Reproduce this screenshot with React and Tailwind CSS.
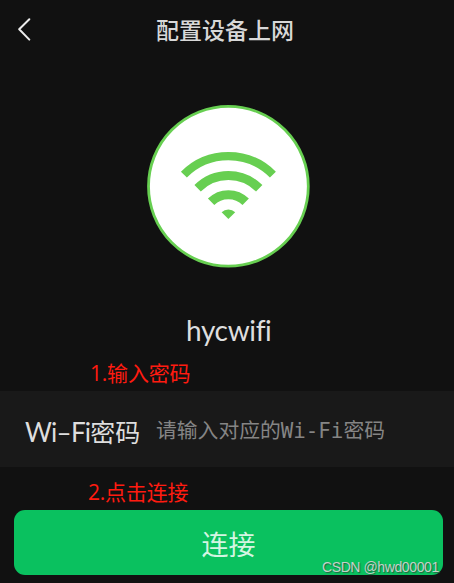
const CJK = "font-['Noto_Sans_CJK_SC',sans-serif]";

function Header() {
  return (
    <header className="flex h-[60px] items-center pl-[17px]">
      <svg width="14" height="24" viewBox="0 0 14 24" fill="none" stroke="#ececec" strokeWidth="2" strokeLinecap="round" strokeLinejoin="round">
        <path d="M12.3 1.2 2.2 11.3 12.3 21.6" />
      </svg>
      <h1 className="mb-[2px] ml-[125px] whitespace-nowrap font-['Noto_Sans_CJK_SC',sans-serif] text-[23px] leading-[30px] font-medium text-[#d8d8d8]">配置设备上网</h1>
    </header>
  );
}

function WifiBadge() {
  return (
    <svg className="ml-[147px] mt-[45px] block shrink-0" width="163" height="163" viewBox="0 0 163 163">
      <circle cx="81.4" cy="81.3" r="79.9" fill="#fff" stroke="#67cf51" strokeWidth="2.8" />
      <g fill="none" stroke="#67cf51">
        <path d="M36.9 69.6a62.9 62.9 0 0 1 89 0" strokeWidth="8.4" />
        <path d="M50.6 83.3a43.5 43.5 0 0 1 61.6 0" strokeWidth="9" />
        <path d="M64.1 96.8a24.5 24.5 0 0 1 34.6 0" strokeWidth="9" />
      </g>
      <path d="M81.4 114.1 74.6 107.3a9.6 9.6 0 0 1 13.6 0Z" fill="#67cf51" />
    </svg>
  );
}

export default function App() {
  return (
    <main className={`relative flex h-[583px] w-[454px] flex-col overflow-hidden bg-[#111111] ${CJK}`}>
      <Header />
      <WifiBadge />
      <div className="mt-[44px] h-[37px] pl-[186px] font-['Lato',sans-serif] text-[28px] leading-[36px] tracking-[-0.35px] text-[#dedede] [font-variant-ligatures:none]">hycwifi</div>
      <div className="mt-[8px] h-[34px] whitespace-nowrap pl-[90px] font-['Open_Sans','Noto_Sans_CJK_SC',sans-serif] text-[21px] leading-[32px] tracking-[-0.2px] text-[#ff1b10]">1.输入密码</div>
      <label className="flex h-[76px] items-center bg-[#191919] whitespace-nowrap">
        <span className="mt-[4px] w-[156px] pl-[25px] text-[25px] leading-[36px] text-[#dedede]"><span className="font-['Lato',sans-serif] text-[26px] tracking-[-0.75px]">Wi–Fi</span>密码</span>
        <span className="mt-[4px] font-['DejaVu_Sans_Mono','Noto_Sans_CJK_SC',monospace] text-[20.8px] leading-[32px] text-[#858585]">请输入对应的Wi-Fi密码</span>
      </label>
      <div className="mt-[9px] h-[34px] whitespace-nowrap pl-[88px] font-['Open_Sans','Noto_Sans_CJK_SC',sans-serif] text-[21px] leading-[32px] tracking-[-0.2px] text-[#ff1b10]">2.点击连接</div>
      <button className="ml-[14px] h-[65px] w-[429px] rounded-[11px] bg-[#0ac15f] pt-[2px] text-[27px] leading-[40px] text-[#d4f5e2]">连接</button>
      <span className="absolute left-[322px] top-[558px] whitespace-nowrap font-['Liberation_Sans',sans-serif] text-[14px] leading-[18px] tracking-[-0.4px] text-[#c2d2c9] [text-shadow:1px_1px_1px_#24613f]">CSDN @hwd00001</span>
    </main>
  );
}
